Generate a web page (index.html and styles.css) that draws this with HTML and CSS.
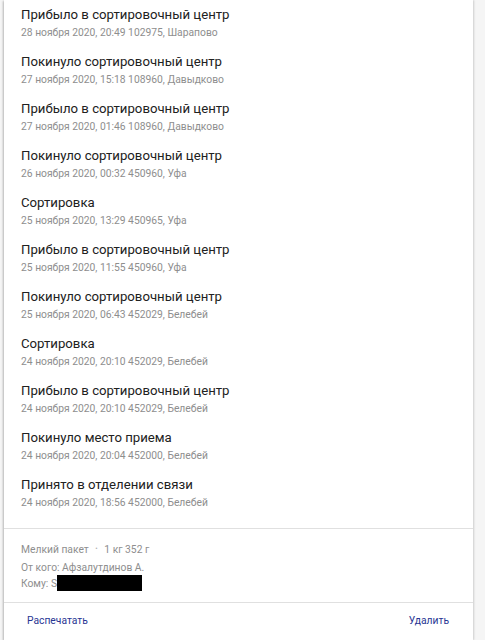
FILE: index.html
```html
<!DOCTYPE html>
<html lang="ru">
<head>
    <meta charset="UTF-8">
    <meta name="viewport" content="width=device-width, initial-scale=1.0">
    <title>Отслеживание</title>
    <link rel="stylesheet" href="styles.css">
</head>
<body>
    <div class="card">
        <ul class="history">
            <li><p class="title">Прибыло в сортировочный центр</p><p class="sub">28 ноября 2020, 20:49 102975, Шарапово</p></li>
            <li><p class="title">Покинуло сортировочный центр</p><p class="sub">27 ноября 2020, 15:18 108960, Давыдково</p></li>
            <li><p class="title">Прибыло в сортировочный центр</p><p class="sub">27 ноября 2020, 01:46 108960, Давыдково</p></li>
            <li><p class="title">Покинуло сортировочный центр</p><p class="sub">26 ноября 2020, 00:32 450960, Уфа</p></li>
            <li><p class="title">Сортировка</p><p class="sub">25 ноября 2020, 13:29 450965, Уфа</p></li>
            <li><p class="title">Прибыло в сортировочный центр</p><p class="sub">25 ноября 2020, 11:55 450960, Уфа</p></li>
            <li><p class="title">Покинуло сортировочный центр</p><p class="sub">25 ноября 2020, 06:43 452029, Белебей</p></li>
            <li><p class="title">Сортировка</p><p class="sub">24 ноября 2020, 20:10 452029, Белебей</p></li>
            <li><p class="title">Прибыло в сортировочный центр</p><p class="sub">24 ноября 2020, 20:10 452029, Белебей</p></li>
            <li><p class="title">Покинуло место приема</p><p class="sub">24 ноября 2020, 20:04 452000, Белебей</p></li>
            <li><p class="title">Принято в отделении связи</p><p class="sub">24 ноября 2020, 18:56 452000, Белебей</p></li>
        </ul>
        <div class="info">
            <p class="kind">Мелкий пакет <span class="dot">•</span> 1 кг 352 г</p>
            <p>От кого: Афзалутдинов А.</p>
            <p>Кому: S<span class="hidden"></span></p>
        </div>
        <div class="actions">
            <button>Распечатать</button>
            <button>Удалить</button>
        </div>
    </div>
</body>
</html>
```

FILE: styles.css
```css
body {
    margin: 0;
    padding: 0 12px 4px 4px;
    background-color: #f5f5f5;
    font-family: Roboto, "Noto Sans", sans-serif;
}
.card {
    background-color: #fff;
    box-shadow: -1px 1px 2px rgba(0, 0, 0, 0.25), 1px 0 2px rgba(0, 0, 0, 0.15);
}
p {
    margin: 0;
}
.history {
    list-style: none;
    margin: 0;
    padding: 0 0 11px;
    border-bottom: 1px solid #e0e0e0;
}
.history li {
    padding: 5px 17px 6px;
}
.title {
    font-size: 13.2px;
    line-height: 20px;
    color: #212121;
}
.sub {
    font-size: 10.3px;
    line-height: 16px;
    color: #8e8e8e;
}
.info {
    padding: 12px 17px 11px;
    font-size: 10.3px;
    line-height: 14px;
    color: #8e8e8e;
    border-bottom: 1px solid #e0e0e0;
}
.info .kind {
    line-height: 16px;
    margin-bottom: 3px;
}
.dot {
    margin: 0 4px;
    font-size: 7px;
    vertical-align: 2px;
    color: #b0b0b0;
}
.hidden {
    display: inline-block;
    width: 85px;
    height: 16px;
    background: #000;
    vertical-align: -4px;
}
.actions {
    display: flex;
    justify-content: space-between;
    padding: 0 14px 0 13px;
    height: 37px;
    align-items: center;
}
.actions button {
    background: transparent;
    border: none;
    font-family: inherit;
    font-size: 10.3px;
    color: #283593;
    padding: 0 10px 2px;
    cursor: pointer;
}
```
